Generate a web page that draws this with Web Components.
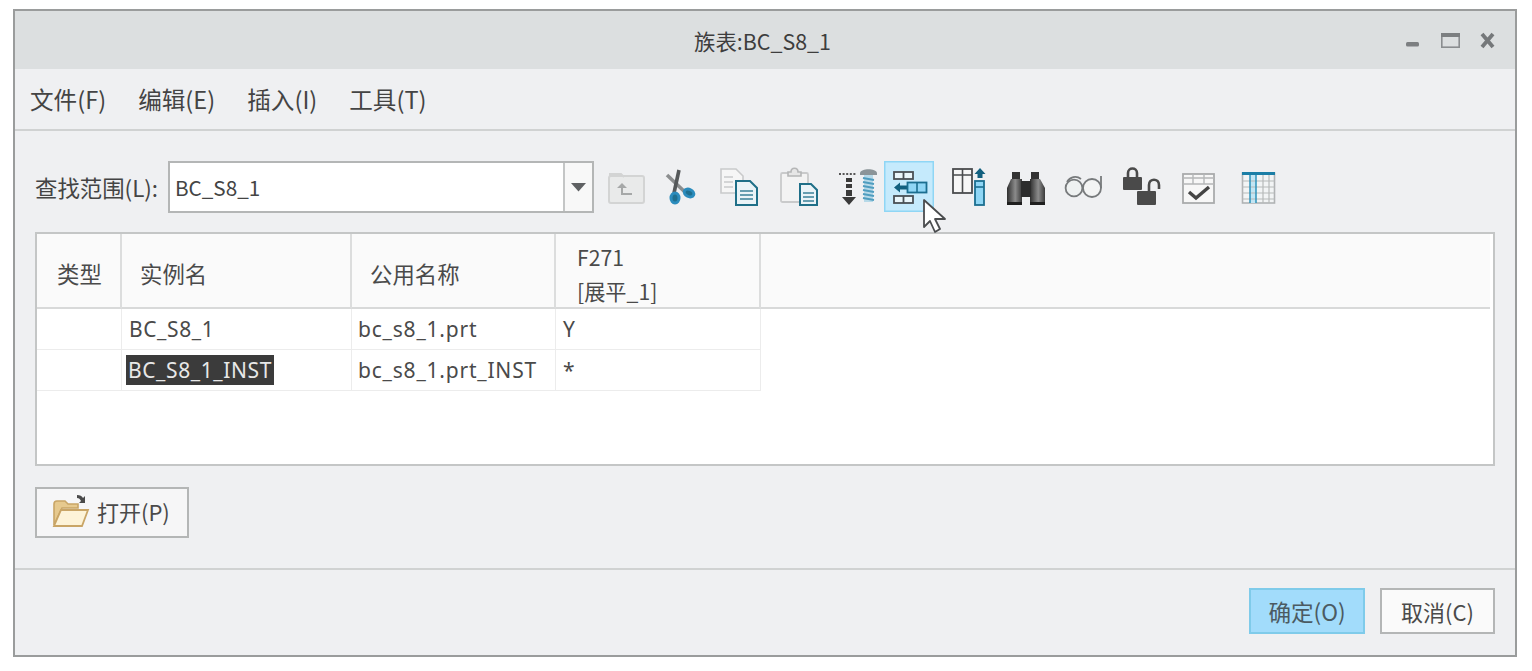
<!DOCTYPE html>
<html lang="zh">
<head>
<meta charset="utf-8">
<title>族表</title>
<style>
    html, body { margin: 0; background: #fff; }
    body { padding: 9px 15px 14px 13px; font-family: "Noto Sans CJK SC", "Noto Sans", sans-serif; color: #444; }
</style>
</head>
<body>
<family-dialog>
    <title-bar slot="title">族表:BC_S8_1</title-bar>
    <menu-bar slot="menu">
        <span>文件(F)</span><span>编辑(E)</span><span>插入(I)</span><span>工具(T)</span>
    </menu-bar>
    <tool-bar slot="tools"></tool-bar>
    <family-table slot="table"></family-table>
    <dlg-button slot="open" kind="open">打开(P)</dlg-button>
    <dlg-button slot="ok" kind="primary">确定(O)</dlg-button>
    <dlg-button slot="cancel">取消(C)</dlg-button>
</family-dialog>

<script>
class FamilyDialog extends HTMLElement {
    connectedCallback() {
        this.attachShadow({ mode: 'open' });
        this.shadowRoot.innerHTML = `
            <style>
                :host {
                    display: flex;
                    flex-direction: column;
                    box-sizing: border-box;
                    width: 1504px;
                    height: 648px;
                    border: 2px solid #9a9c9c;
                    background: #eff0f2;
                    position: relative;
                }
                .body { padding: 0 20px; }
                .table { margin: 19px 0 0 0; padding-right: 1px; }
                .open { margin-top: 21px; }
                .foot {
                    margin-top: 30px;
                    border-top: 2px solid #d0d2d2;
                    padding: 18px 20px 0 0;
                    display: flex;
                    justify-content: flex-end;
                    gap: 15px;
                }
                svg.cursor { position: absolute; left: 908px; top: 188px; }
            </style>
            <slot name="title"></slot>
            <slot name="menu"></slot>
            <div class="body">
                <slot name="tools"></slot>
                <div class="table"><slot name="table"></slot></div>
                <div class="open"><slot name="open"></slot></div>
            </div>
            <div class="foot"><slot name="ok"></slot><slot name="cancel"></slot></div>
            <svg class="cursor" width="26" height="38" viewBox="0 0 26 38">
                <path d="M1 1 L1 28 L7 22 L12 33 L17 30 L12 20 L22 20 Z" fill="#fff" stroke="#4a4c4e" stroke-width="1.8" stroke-linejoin="round"/>
            </svg>
        `;
    }
}
customElements.define('family-dialog', FamilyDialog);

class TitleBar extends HTMLElement {
    connectedCallback() {
        this.attachShadow({ mode: 'open' });
        this.shadowRoot.innerHTML = `
            <style>
                :host {
                    display: flex;
                    align-items: center;
                    justify-content: center;
                    position: relative;
                    height: 58px;
                    background: #dcdfe0;
                    font-size: 21.4px;
                    color: #3d3d3d;
                }
                span { margin-left: -5px; }
                .ctl { position: absolute; right: 0; top: 0; display: flex; }
            </style>
            <span><slot></slot></span>
            <svg class="ctl" width="120" height="58" viewBox="0 0 120 58">
                <rect x="11" y="31" width="13" height="4.4" rx="1.5" fill="#7c7f81"/>
                <rect x="46.8" y="22.8" width="17.4" height="13.4" fill="none" stroke="#8a8d8f" stroke-width="1.6"/>
                <rect x="46" y="22" width="19" height="4" fill="#7c7f81"/>
                <path d="M87 23 L98 36 M98 23 L87 36" stroke="#75787a" stroke-width="3.8"/>
            </svg>
        `;
    }
}
customElements.define('title-bar', TitleBar);

class MenuBar extends HTMLElement {
    connectedCallback() {
        this.attachShadow({ mode: 'open' });
        this.shadowRoot.innerHTML = `
            <style>
                :host {
                    display: flex;
                    align-items: center;
                    gap: 32px;
                    height: 60px;
                    padding: 0 0 0 15px;
                    border-bottom: 2px solid #d0d2d2;
                    font-size: 23.6px;
                    color: #444;
                }
            </style>
            <slot></slot>
        `;
    }
}
customElements.define('menu-bar', MenuBar);

const ICONS = {
    up: `<rect x="8" y="15" width="35" height="27" rx="2" fill="#e9eaea" stroke="#d3d4d4" stroke-width="2"/>
         <path d="M9 15 V13 H20 L23 16" fill="none" stroke="#d3d4d4" stroke-width="2"/>
         <path d="M21 22 L16 27 H20 V34 H31 V32 H22 V27 H26 Z" fill="#a6a8a8"/>`,
    cut: `<path d="M10 14 L30 33" stroke="#8c8e8f" stroke-width="3.6"/>
          <path d="M22 9 L17 32" stroke="#55585a" stroke-width="3.6"/>
          <ellipse cx="18" cy="37" rx="4" ry="5" fill="#1f6f8f" stroke="#2b8cbd" stroke-width="3"/>
          <ellipse cx="32" cy="32" rx="5" ry="3.6" transform="rotate(25 32 32)" fill="#1f6f8f" stroke="#2b8cbd" stroke-width="3"/>`,
    copy: `<path d="M6 8 H21 L28 15 V32 H6 Z" fill="#f6f6f6" stroke="#c9cacb" stroke-width="1.6"/>
           <path d="M9 16 H18 M9 21 H18 M9 26 H18" stroke="#c9cacb" stroke-width="1.6"/>
           <path d="M21 20 H35 L42 27 V44 H21 Z" fill="#eaf3f7" stroke="#1f6f88" stroke-width="2"/>
           <path d="M25 30 H38 M25 34 H38 M25 38 H38" stroke="#3b8199" stroke-width="1.7"/>`,
    paste: `<rect x="7" y="12" width="27" height="29" rx="1.5" fill="#f3f3f3" stroke="#c9cacb" stroke-width="1.8"/>
            <path d="M14 15 V11 H17 C17 6 24 6 24 11 H27 V15 Z" fill="#e6e6e6" stroke="#b5b6b7" stroke-width="1.6"/>
            <path d="M26 23 H37 L43 29 V44 H26 Z" fill="#eaf3f7" stroke="#1f6f88" stroke-width="2"/>
            <path d="M29 32 H40 M29 36 H40 M29 40 H40" stroke="#3b8199" stroke-width="1.6"/>`,
    screw: `<path d="M6 13 H24" stroke="#555" stroke-width="1.8" stroke-dasharray="2 1.6"/>
            <path d="M13 17 H19 V21 H13 Z M13 23 H19 V27 H13 Z M13 29 H19 V35 H13 Z" fill="#3a3a3a"/>
            <path d="M9 36 H23 L16 44 Z" fill="#3a3a3a"/>
            <path d="M27 12 C28 7 43 7 44 12 V14 H27 Z" fill="#8b9498"/>
            <rect x="31" y="14" width="9" height="27" fill="#b6d9e8"/>
            <path d="M30 17 L41 19 M30 21 L41 23 M30 25 L41 27 M30 29 L41 31 M30 33 L41 35 M30 37 L41 39" stroke="#4f9dbf" stroke-width="1.8"/>`,
    hilite: `<rect x="0.75" y="0.75" width="48.5" height="49.5" fill="#c5eafc" stroke="#8fd6f5" stroke-width="1.5"/>
             <g fill="#eaf6fb" stroke="#4a5055" stroke-width="1.8">
                <rect x="10" y="11" width="19" height="7"/><path d="M19.5 11 V18" fill="none"/>
                <rect x="10" y="35" width="19" height="7"/><path d="M19.5 35 V42" fill="none"/>
             </g>
             <path d="M10 26.5 L16 21.5 V24.5 H23 V28.5 H16 V31.5 Z" fill="#12607f"/>
             <rect x="23.5" y="21.5" width="19" height="10" fill="#8fd6f5" stroke="#1b6e90" stroke-width="1.8"/>
             <path d="M33 21.5 V31.5" stroke="#1b6e90" stroke-width="1.6"/>`,
    col: `<rect x="10" y="8" width="19" height="24" fill="#f6f6f6" stroke="#4a4c4e" stroke-width="1.8"/>
          <path d="M10 14 H29 M19.5 8 V32" stroke="#4a4c4e" stroke-width="1.6"/>
          <path d="M37 7 L42.5 13 H39.5 V17 H34.5 V13 H31.5 Z" fill="#12607f"/>
          <rect x="32" y="20" width="9" height="24" fill="#8fd6f5" stroke="#1b6e90" stroke-width="1.8"/>
          <path d="M32 26 H41" stroke="#1b6e90" stroke-width="1.6"/>`,
    find: `<defs><linearGradient id="bn" x1="0" x2="1" y1="0" y2="0"><stop offset="0" stop-color="#2f2f2f"/><stop offset="0.55" stop-color="#8b8b8b"/><stop offset="1" stop-color="#3a3a3a"/></linearGradient></defs>
           <rect x="10" y="11" width="8" height="9" fill="#333"/><rect x="29" y="11" width="8" height="9" fill="#333"/>
           <path d="M9 18 H20 V42 H5 V27 Z" fill="url(#bn)"/><path d="M28 18 H38 L43 27 V42 H28 Z" fill="url(#bn)"/>
           <rect x="19" y="20" width="10" height="16" fill="#2d2d2d"/>
           <rect x="5" y="41" width="15" height="3" fill="#1f1f1f"/><rect x="28" y="41" width="15" height="3" fill="#1f1f1f"/>`,
    glasses: `<circle cx="16" cy="27" r="8.4" fill="#eef1f1" stroke="#777a7c" stroke-width="1.8"/>
              <circle cx="34" cy="27" r="9" fill="#f3f4f4" stroke="#777a7c" stroke-width="1.8"/>
              <path d="M9 21 C12 16 18 14 23 18 M43 27 L43 15" fill="none" stroke="#777a7c" stroke-width="1.8"/>`,
    locks: `<path d="M11 17 V12 C11 6 20 6 20 12 V17" fill="none" stroke="#4a4a4a" stroke-width="2.6"/>
            <rect x="6" y="16" width="19" height="13" rx="1" fill="#4a4a4a"/>
            <path d="M32 30 V24 C32 17 42 17 42 24 V28" fill="none" stroke="#4a4a4a" stroke-width="2.6"/>
            <rect x="20" y="30" width="19" height="14" rx="1" fill="#4a4a4a"/>`,
    check: `<rect x="9" y="13" width="31" height="29" fill="#f7f7f7" stroke="#a9abac" stroke-width="1.8"/>
            <path d="M9 17 H40 M9 23 H40 M19 13 V23 M30 13 V23" stroke="#b5b7b8" stroke-width="1.4"/>
            <path d="M15 31 L22 37 L35 26" fill="none" stroke="#444" stroke-width="3.4"/>`,
    grid: `<rect x="9.5" y="12" width="32" height="30" fill="#f2f4f5" stroke="#b0b3b4" stroke-width="1.6"/>
           <rect x="17" y="14" width="6" height="28" fill="#c3e5f3"/>
           <path d="M9.5 20 H41.5 M9.5 26 H41.5 M9.5 32 H41.5 M9.5 38 H41.5 M30 14 V42 M36 14 V42" stroke="#b6b9ba" stroke-width="1.2"/>
           <path d="M17 14 V42 M23 14 V42" stroke="#2e93ba" stroke-width="1.5"/>
           <rect x="9" y="11" width="33" height="3" fill="#1b7ea6"/>`
};

class ToolIcon extends HTMLElement {
    connectedCallback() {
        this.attachShadow({ mode: 'open' });
        this.shadowRoot.innerHTML = `
            <style>:host { display: block; width: 50px; height: 51px; flex: none; } svg { display: block; }</style>
            <svg width="50" height="51" viewBox="0 0 50 51">${ICONS[this.getAttribute('name')]}</svg>
        `;
    }
}
customElements.define('tool-icon', ToolIcon);

class ToolBar extends HTMLElement {
    connectedCallback() {
        this.attachShadow({ mode: 'open' });
        // spacing between icons is not regular in the original
        const icons = [['up', 7], ['cut', 6], ['copy', 8], ['paste', 9], ['screw', 9], ['hilite', 1],
                       ['col', 9], ['find', 9], ['glasses', 6], ['locks', 9], ['check', 7], ['grid', 9]];
        this.shadowRoot.innerHTML = `
            <style>
                :host {
                    display: flex;
                    align-items: flex-start;
                    padding-top: 30px;
                    font-size: 22.4px;
                    color: #444;
                }
                .lbl { width: 133px; line-height: 52px; white-space: nowrap; }
                .combo {
                    box-sizing: border-box;
                    width: 426px;
                    height: 52px;
                    display: flex;
                    background: #fff;
                    border: 2px solid #b4b6b6;
                }
                .val { flex: 1; padding-left: 5px; line-height: 48px; font-size: 20.7px; }
                .drop {
                    width: 27px;
                    border-left: 2px solid #c4c6c6;
                    background: #f8f8f8;
                    display: flex;
                    align-items: center;
                    justify-content: center;
                }
                .tools { display: flex; }
                .tools tool-icon:nth-child(n) { margin-left: var(--gap); }
            </style>
            <div class="lbl">查找范围(L):</div>
            <div class="combo">
                <div class="val">BC_S8_1</div>
                <div class="drop"><svg width="15" height="9" viewBox="0 0 15 9"><path d="M0 0 H15 L7.5 8.5 Z" fill="#5f6163"/></svg></div>
            </div>
            <div class="tools">
                ${icons.map(([n, g]) => `<tool-icon name="${n}" style="--gap:${g}px"></tool-icon>`).join('')}
            </div>
        `;
    }
}
customElements.define('tool-bar', ToolBar);

class FamilyTable extends HTMLElement {
    connectedCallback() {
        this.attachShadow({ mode: 'open' });
        this.shadowRoot.innerHTML = `
            <style>
                :host {
                    display: block;
                    box-sizing: border-box;
                    height: 234px;
                    width: 1460px;
                    background: #fff;
                    border: 2px solid #c4c6c6;
                    font-size: 21px;
                    font-family: "Noto Sans", "Noto Sans CJK SC", sans-serif;
                    color: #4a4a4a;
                }
                .grid { display: grid; grid-template-columns: 85px 230px 204px 205px 729px; }
                .h {
                    box-sizing: border-box;
                    height: 75px;
                    background: #fafafa;
                    border-right: 2px solid #dcdddd;
                    border-bottom: 2px solid #d8d9d9;
                    display: flex;
                    align-items: center;
                    padding: 4px 0 0 18px;
                    font-family: "Noto Sans CJK SC", "Noto Sans", sans-serif;
                    font-size: 22.4px;
                    line-height: 34px;
                }
                .h.t { padding-left: 20px; }
                .h.s { padding: 7px 0 0 21px; font-size: 21.2px; }
                .c {
                    box-sizing: border-box;
                    height: 41px;
                    border-right: 1px solid #ececec;
                    border-bottom: 1px solid #ececec;
                    padding-left: 7px;
                    line-height: 40px;
                    letter-spacing: .6px;
                    white-space: nowrap;
                }
                .c.n { padding-left: 6px; letter-spacing: .8px; }
                .c.e { border: 0; }
                .sel { background: #3b3b3b; color: #e8e8e8; padding: 1px 2px; margin-left: -3px; }
            </style>
            <div class="grid">
                <div class="h t">类型</div>
                <div class="h">实例名</div>
                <div class="h">公用名称</div>
                <div class="h s"><div>F271<br>[展平_1]</div></div>
                <div class="h" style="border-right:0"></div>

                <div class="c"></div><div class="c">BC_S8_1</div><div class="c n">bc_s8_1.prt</div><div class="c">Y</div><div class="c e"></div>
                <div class="c"></div><div class="c"><span class="sel">BC_S8_1_INST</span></div><div class="c n">bc_s8_1.prt_INST</div><div class="c">*</div><div class="c e"></div>
            </div>
        `;
    }
}
customElements.define('family-table', FamilyTable);

class DlgButton extends HTMLElement {
    connectedCallback() {
        this.attachShadow({ mode: 'open' });
        const kind = this.getAttribute('kind');
        const folder = kind === 'open' ? `
            <svg width="40" height="36" viewBox="0 0 40 36">
                <path d="M3 32 V11 C3 9 4 8 6 8 H14 L17 11 H27 V15 H11 L3 32 Z" fill="#e6c98e" stroke="#c9a566" stroke-width="1.6"/>
                <path d="M3 33 L10 17 H37 L31 33 Z" fill="#fdf3d8" stroke="#c9a566" stroke-width="1.8"/>
                <path d="M26 2 C29 2 31 3 32 5 L34 3 V10 H28 L30 8 C29 6 28 5 26 5 Z" fill="#4a4a4a"/>
            </svg>` : '';
        this.shadowRoot.innerHTML = `
            <style>
                :host {
                    display: inline-flex;
                    box-sizing: border-box;
                    width: 115px;
                    height: 46px;
                    align-items: center;
                    justify-content: center;
                    background: #fafafa;
                    border: 2px solid #b4b6b6;
                    font-size: 22px;
                    color: #4a4a4a;
                    vertical-align: top;
                }
                :host([kind="primary"]) { background: #a2dcfb; border-color: #7fcbea; width: 116px; color: #4b5a62; font-size: 22.6px; }
                :host([kind="open"]) { width: 154px; height: 51px; background: #f6f6f7; gap: 6px; justify-content: flex-start; padding: 0 0 4px 14px; }
            </style>
            ${folder}<slot></slot>
        `;
    }
}
customElements.define('dlg-button', DlgButton);
</script>
</body>
</html>
